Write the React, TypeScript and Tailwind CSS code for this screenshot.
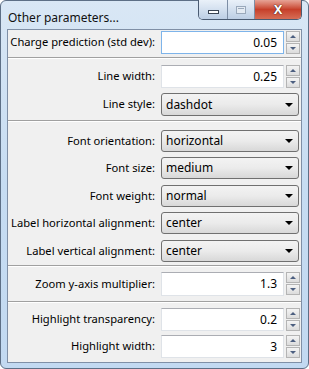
import { ReactNode } from 'react';

const font = { fontFamily: '"Segoe UI", "Noto Sans", sans-serif' };

function Spinner() {
    return (
        <div className="flex flex-col gap-[1px] ml-[2px] w-[14px] shrink-0">
            <div className="h-[11px] border border-[#b4b4b4] bg-gradient-to-b from-[#f4f4f4] to-[#dcdcdc] flex items-center justify-center">
                <div className="w-0 h-0 border-x-[3px] border-x-transparent border-b-[3px] border-b-[#4c5f80]" />
            </div>
            <div className="h-[11px] border border-[#b4b4b4] bg-gradient-to-b from-[#f4f4f4] to-[#dcdcdc] flex items-center justify-center">
                <div className="w-0 h-0 border-x-[3px] border-x-transparent border-t-[3px] border-t-[#4c5f80]" />
            </div>
        </div>
    );
}

function NumberField({ value, focused }: { value: string; focused?: boolean }) {
    return (
        <div className="flex items-stretch h-full">
            <div
                className={`w-[123px] shrink-0 bg-white flex items-center justify-end pr-[6px] text-[12px] border ${
                    focused
                        ? 'border-[#7eb4ea]'
                        : 'border-[#dfe3e8] border-t-[#abadb3]'
                }`}
            >
                {value}
            </div>
            <Spinner />
        </div>
    );
}

function Combo({ value }: { value: string }) {
    return (
        <div className="w-[138px] shrink-0 h-full rounded-[3px] border border-[#707070] bg-gradient-to-b from-[#f3f3f3] via-[#ebebeb] to-[#d8d8d8] flex items-center justify-between pl-[4px] pr-[5px] text-[12px]">
            <span>{value}</span>
            <div className="w-0 h-0 border-x-[4px] border-x-transparent border-t-[4px] border-t-black" />
        </div>
    );
}

function Row({ label, children, h, className = '' }: { label: string; children: ReactNode; h: string; className?: string }) {
    return (
        <div className={`flex items-center ${h} ${className}`}>
            <div className="w-[147px] shrink-0 text-right whitespace-nowrap">{label}</div>
            <div className="ml-[6px] h-full shrink-0">{children}</div>
        </div>
    );
}

function Separator() {
    return <div className="border-t border-t-[#a0a0a0] border-b border-b-white" />;
}

export default function App() {
    return (
        <div className="w-[309px] h-[369px] bg-white text-[11.2px] text-black" style={font}>
            <div className="w-full h-full rounded-[6px] border border-[#5d6f86] bg-gradient-to-b from-[#d9e7f5] via-[#c6dcf2] to-[#c2d9f1] flex flex-col">
                <div className="h-[28px] flex items-start justify-between">
                    <div className="pl-[7px] pt-[8px] text-[12px] text-[#111]">Other parameters...</div>
                    <div className="flex mr-[6px] -mt-[1px] h-[20px] rounded-b-[5px] border border-t-0 border-[#4a5b72] overflow-hidden">
                        <div className="w-[29px] bg-gradient-to-b from-[#eaf1f9] via-[#d3e0ef] to-[#bccee4] border-r border-[#7d8ea5] flex items-center justify-center">
                            <div className="mt-[4px] w-[11px] h-[4px] bg-white border border-[#3a4453]" />
                        </div>
                        <div className="w-[27px] bg-gradient-to-b from-[#eaf1f9] via-[#d3e0ef] to-[#bccee4] border-r border-[#7d8ea5] flex items-center justify-center">
                            <div className="w-[10px] h-[8px] border border-[#9aa9bb] bg-[#e4ebf3]">
                                <div className="mt-[1px] mx-[1px] h-[1px] bg-[#9aa9bb]" />
                            </div>
                        </div>
                        <div className="w-[46px] bg-gradient-to-b from-[#e6a396] via-[#c63f2a] to-[#d66d55] flex items-center justify-center">
                            <span className="text-white font-bold text-[13px] leading-none" style={{ textShadow: '0 0 1px #3b1208, 0 0 1px #3b1208' }}>
                                X
                            </span>
                        </div>
                    </div>
                </div>
                <div className="mx-[6px] h-[334px] border border-[#7f8fa6] bg-[#f0f0f0] flex flex-col">
                    <div className="pt-[1px] pb-[3px]">
                        <Row label="Charge prediction (std dev):" h="h-[23px]">
                            <NumberField value="0.05" focused />
                        </Row>
                    </div>
                    <Separator />
                    <div className="pt-[6px] pb-[4px] flex flex-col gap-[5px]">
                        <Row label="Line width:" h="h-[23px]">
                            <NumberField value="0.25" />
                        </Row>
                        <Row label="Line style:" h="h-[23px]">
                            <Combo value="dashdot" />
                        </Row>
                    </div>
                    <Separator />
                    <div className="pt-[8px] pb-[3px] flex flex-col">
                        <Row label="Font orientation:" h="h-[22px]">
                            <Combo value="horizontal" />
                        </Row>
                        <Row label="Font size:" h="h-[22px]" className="mt-[5px]">
                            <Combo value="medium" />
                        </Row>
                        <Row label="Font weight:" h="h-[22px]" className="mt-[6px]">
                            <Combo value="normal" />
                        </Row>
                        <Row label="Label horizontal alignment:" h="h-[22px]" className="mt-[5px]">
                            <Combo value="center" />
                        </Row>
                        <Row label="Label vertical alignment:" h="h-[22px]" className="mt-[6px]">
                            <Combo value="center" />
                        </Row>
                    </div>
                    <Separator />
                    <div className="pt-[5px] pb-[5px]">
                        <Row label="Zoom y-axis multiplier:" h="h-[24px]">
                            <NumberField value="1.3" />
                        </Row>
                    </div>
                    <Separator />
                    <div className="pt-[5px] flex flex-col gap-[4px]">
                        <Row label="Highlight transparency:" h="h-[23px]">
                            <NumberField value="0.2" />
                        </Row>
                        <Row label="Highlight width:" h="h-[23px]">
                            <NumberField value="3" />
                        </Row>
                    </div>
                </div>
            </div>
        </div>
    );
}
